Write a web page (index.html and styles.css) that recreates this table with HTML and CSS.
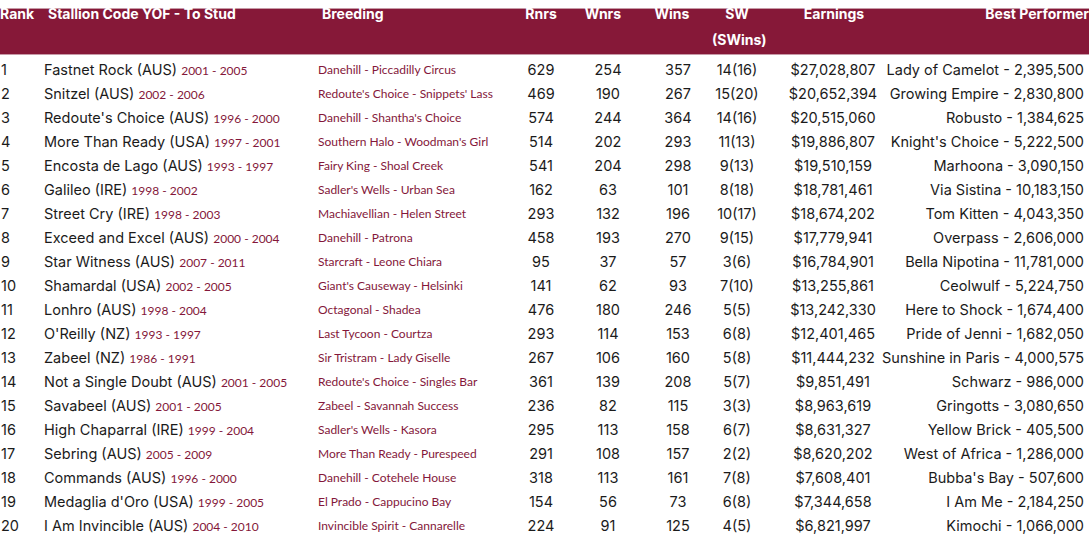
FILE: index.html
```html
<!DOCTYPE html>
<html lang="en">
<head>
<meta charset="utf-8">
<title>Leading Sires</title>
<link rel="stylesheet" href="styles.css">
</head>
<body>
<table class="sires">
  <colgroup>
    <col class="c-rank"><col class="c-stallion"><col class="c-breeding"><col class="c-rnrs"><col class="c-wnrs"><col class="c-wins"><col class="c-sw"><col class="c-earn"><col class="c-best">
  </colgroup>
  <thead>
    <tr>
      <th class="h-rank"><div class="hd">Rank</div></th>
      <th class="h-stallion"><div class="hd">Stallion Code YOF - To Stud</div></th>
      <th class="h-breeding"><div class="hd">Breeding</div></th>
      <th class="num"><div class="hd">Rnrs</div></th>
      <th class="num h-wnrs"><div class="hd">Wnrs</div></th>
      <th class="num h-wins"><div class="hd">Wins</div></th>
      <th class="num"><div class="hd">SW<br>(SWins)</div></th>
      <th class="num h-earn"><div class="hd">Earnings</div></th>
      <th class="h-best"><div class="hd">Best Performer</div></th>
    </tr>
  </thead>
  <tbody>
    <tr><td class="rank">1</td><td class="stallion">Fastnet Rock (AUS) <span class="yr">2001 - 2005</span></td><td class="breed">Danehill - Piccadilly Circus</td><td class="num">629</td><td class="num">254</td><td class="num">357</td><td class="num">14(16)</td><td class="num earn">$27,028,807</td><td class="best">Lady of Camelot - 2,395,500</td></tr>
    <tr><td class="rank">2</td><td class="stallion">Snitzel (AUS) <span class="yr">2002 - 2006</span></td><td class="breed">Redoute's Choice - Snippets' Lass</td><td class="num">469</td><td class="num">190</td><td class="num">267</td><td class="num">15(20)</td><td class="num earn">$20,652,394</td><td class="best">Growing Empire - 2,830,800</td></tr>
    <tr><td class="rank">3</td><td class="stallion">Redoute's Choice (AUS) <span class="yr">1996 - 2000</span></td><td class="breed">Danehill - Shantha's Choice</td><td class="num">574</td><td class="num">244</td><td class="num">364</td><td class="num">14(16)</td><td class="num earn">$20,515,060</td><td class="best">Robusto - 1,384,625</td></tr>
    <tr><td class="rank">4</td><td class="stallion">More Than Ready (USA) <span class="yr">1997 - 2001</span></td><td class="breed">Southern Halo - Woodman's Girl</td><td class="num">514</td><td class="num">202</td><td class="num">293</td><td class="num">11(13)</td><td class="num earn">$19,886,807</td><td class="best">Knight's Choice - 5,222,500</td></tr>
    <tr><td class="rank">5</td><td class="stallion">Encosta de Lago (AUS) <span class="yr">1993 - 1997</span></td><td class="breed">Fairy King - Shoal Creek</td><td class="num">541</td><td class="num">204</td><td class="num">298</td><td class="num">9(13)</td><td class="num earn">$19,510,159</td><td class="best">Marhoona - 3,090,150</td></tr>
    <tr><td class="rank">6</td><td class="stallion">Galileo (IRE) <span class="yr">1998 - 2002</span></td><td class="breed">Sadler's Wells - Urban Sea</td><td class="num">162</td><td class="num">63</td><td class="num">101</td><td class="num">8(18)</td><td class="num earn">$18,781,461</td><td class="best">Via Sistina - 10,183,150</td></tr>
    <tr><td class="rank">7</td><td class="stallion">Street Cry (IRE) <span class="yr">1998 - 2003</span></td><td class="breed">Machiavellian - Helen Street</td><td class="num">293</td><td class="num">132</td><td class="num">196</td><td class="num">10(17)</td><td class="num earn">$18,674,202</td><td class="best">Tom Kitten - 4,043,350</td></tr>
    <tr><td class="rank">8</td><td class="stallion">Exceed and Excel (AUS) <span class="yr">2000 - 2004</span></td><td class="breed">Danehill - Patrona</td><td class="num">458</td><td class="num">193</td><td class="num">270</td><td class="num">9(15)</td><td class="num earn">$17,779,941</td><td class="best">Overpass - 2,606,000</td></tr>
    <tr><td class="rank">9</td><td class="stallion">Star Witness (AUS) <span class="yr">2007 - 2011</span></td><td class="breed">Starcraft - Leone Chiara</td><td class="num">95</td><td class="num">37</td><td class="num">57</td><td class="num">3(6)</td><td class="num earn">$16,784,901</td><td class="best">Bella Nipotina - 11,781,000</td></tr>
    <tr><td class="rank">10</td><td class="stallion">Shamardal (USA) <span class="yr">2002 - 2005</span></td><td class="breed">Giant's Causeway - Helsinki</td><td class="num">141</td><td class="num">62</td><td class="num">93</td><td class="num">7(10)</td><td class="num earn">$13,255,861</td><td class="best">Ceolwulf - 5,224,750</td></tr>
    <tr><td class="rank">11</td><td class="stallion">Lonhro (AUS) <span class="yr">1998 - 2004</span></td><td class="breed">Octagonal - Shadea</td><td class="num">476</td><td class="num">180</td><td class="num">246</td><td class="num">5(5)</td><td class="num earn">$13,242,330</td><td class="best">Here to Shock - 1,674,400</td></tr>
    <tr><td class="rank">12</td><td class="stallion">O'Reilly (NZ) <span class="yr">1993 - 1997</span></td><td class="breed">Last Tycoon - Courtza</td><td class="num">293</td><td class="num">114</td><td class="num">153</td><td class="num">6(8)</td><td class="num earn">$12,401,465</td><td class="best">Pride of Jenni - 1,682,050</td></tr>
    <tr><td class="rank">13</td><td class="stallion">Zabeel (NZ) <span class="yr">1986 - 1991</span></td><td class="breed">Sir Tristram - Lady Giselle</td><td class="num">267</td><td class="num">106</td><td class="num">160</td><td class="num">5(8)</td><td class="num earn">$11,444,232</td><td class="best">Sunshine in Paris - 4,000,575</td></tr>
    <tr><td class="rank">14</td><td class="stallion">Not a Single Doubt (AUS) <span class="yr">2001 - 2005</span></td><td class="breed">Redoute's Choice - Singles Bar</td><td class="num">361</td><td class="num">139</td><td class="num">208</td><td class="num">5(7)</td><td class="num earn">$9,851,491</td><td class="best">Schwarz - 986,000</td></tr>
    <tr><td class="rank">15</td><td class="stallion">Savabeel (AUS) <span class="yr">2001 - 2005</span></td><td class="breed">Zabeel - Savannah Success</td><td class="num">236</td><td class="num">82</td><td class="num">115</td><td class="num">3(3)</td><td class="num earn">$8,963,619</td><td class="best">Gringotts - 3,080,650</td></tr>
    <tr><td class="rank">16</td><td class="stallion">High Chaparral (IRE) <span class="yr">1999 - 2004</span></td><td class="breed">Sadler's Wells - Kasora</td><td class="num">295</td><td class="num">113</td><td class="num">158</td><td class="num">6(7)</td><td class="num earn">$8,631,327</td><td class="best">Yellow Brick - 405,500</td></tr>
    <tr><td class="rank">17</td><td class="stallion">Sebring (AUS) <span class="yr">2005 - 2009</span></td><td class="breed">More Than Ready - Purespeed</td><td class="num">291</td><td class="num">108</td><td class="num">157</td><td class="num">2(2)</td><td class="num earn">$8,620,202</td><td class="best">West of Africa - 1,286,000</td></tr>
    <tr><td class="rank">18</td><td class="stallion">Commands (AUS) <span class="yr">1996 - 2000</span></td><td class="breed">Danehill - Cotehele House</td><td class="num">318</td><td class="num">113</td><td class="num">161</td><td class="num">7(8)</td><td class="num earn">$7,608,401</td><td class="best">Bubba's Bay - 507,600</td></tr>
    <tr><td class="rank">19</td><td class="stallion">Medaglia d'Oro (USA) <span class="yr">1999 - 2005</span></td><td class="breed">El Prado - Cappucino Bay</td><td class="num">154</td><td class="num">56</td><td class="num">73</td><td class="num">6(8)</td><td class="num earn">$7,344,658</td><td class="best">I Am Me - 2,184,250</td></tr>
    <tr><td class="rank">20</td><td class="stallion">I Am Invincible (AUS) <span class="yr">2004 - 2010</span></td><td class="breed">Invincible Spirit - Cannarelle</td><td class="num">224</td><td class="num">91</td><td class="num">125</td><td class="num">4(5)</td><td class="num earn">$6,821,997</td><td class="best">Kimochi - 1,066,000</td></tr>
  </tbody>
</table>
</body>
</html>
```

FILE: styles.css
```css
html, body {
  margin: 0;
  padding: 0;
  background: #ffffff;
}
body {
  font-family: Inter, Lato, "Liberation Sans", sans-serif;
  color: #1b1b1b;
  overflow: hidden;
}
.sires {
  border-collapse: collapse;
  table-layout: fixed;
  width: 1089px;
  margin-top: 8px;
}
.c-rank { width: 44px; }
.c-stallion { width: 274px; }
.c-breeding { width: 192px; }
.c-rnrs { width: 62px; }
.c-wnrs { width: 72px; }
.c-wins { width: 68px; }
.c-sw { width: 50px; }
.c-earn { width: 120px; }
.c-best { width: 207px; }

.sires th {
  background: #861838;
  color: #ffffff;
  font-weight: 700;
  font-size: 14px;
  line-height: 26px;
  height: 45px;
  padding: 0;
  vertical-align: top;
  white-space: nowrap;
  border-top: 1px solid #c79aa7;
  border-bottom: 1px solid #c79aa7;
}
.sires th .hd {
  margin-top: -8px;
}
.sires th.h-rank { text-align: left; }
.sires th.h-stallion, .sires th.h-breeding { text-align: left; }
.h-stallion .hd, .h-breeding .hd { padding-left: 4px; }
.sires th.num { text-align: center; }
.h-wnrs .hd { padding-right: 10px; }
.h-wins .hd { padding-right: 12px; }
.h-earn .hd { padding-left: 24px; }
.sires th.h-best { text-align: right; }

.sires td {
  padding: 0;
  height: 24px;
  line-height: 24px;
  font-size: 14.5px;
  white-space: nowrap;
  vertical-align: middle;
}
.sires tbody tr:first-child td {
  padding-top: 3px;
}
.sires td.rank { padding-left: 1px; }
.yr {
  font-family: Lato, "Liberation Sans", sans-serif;
  color: #84173a;
  font-size: 12px;
  font-weight: 400;
  line-height: 1;
}
.sires td.breed {
  font-family: Lato, "Liberation Sans", sans-serif;
  color: #84173a;
  font-size: 12px;
  font-weight: 400;
}
.sires td.num { text-align: center; }
.sires td.earn { padding-left: 22px; }
.sires td.best { text-align: right; padding-right: 5px; }
```
